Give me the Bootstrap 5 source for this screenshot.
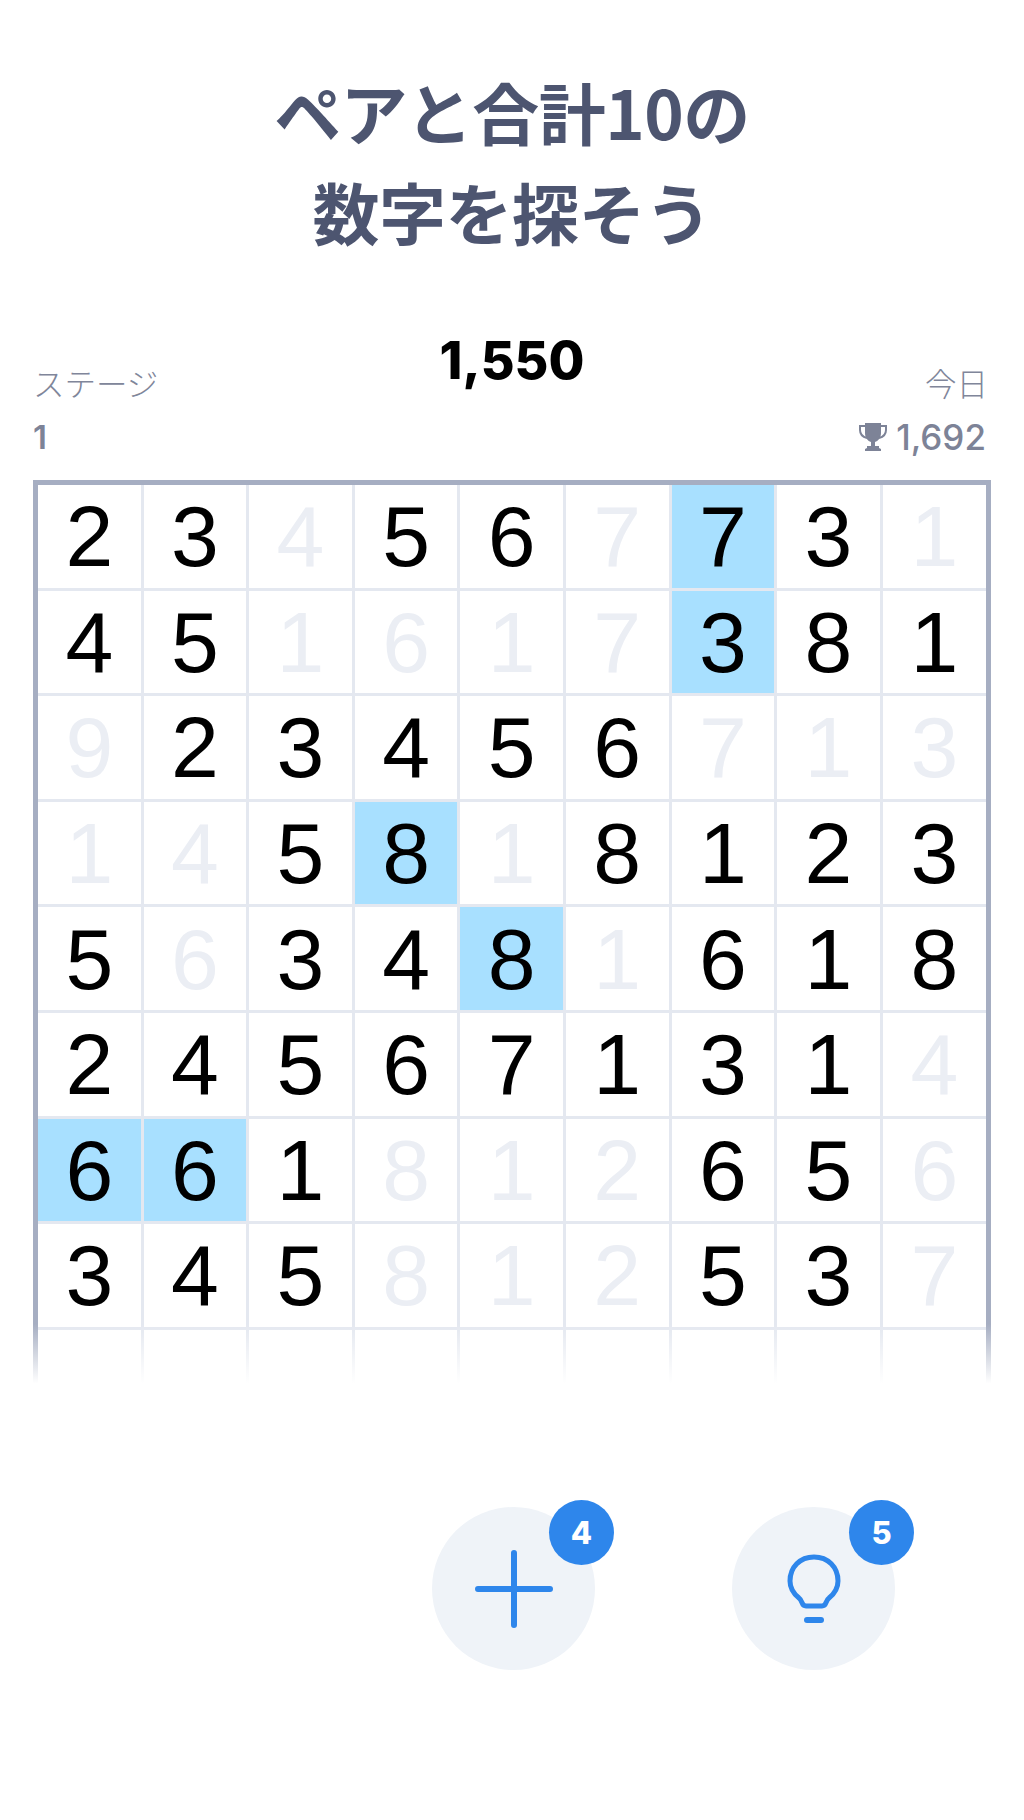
<!DOCTYPE html>
<html lang="ja">
<head>
  <meta charset="UTF-8" />
  <meta name="viewport" content="width=device-width, initial-scale=1" />
  <title>ペアと合計10の数字を探そう</title>
  <link href="https://cdn.jsdelivr.net/npm/bootstrap@5.3.0/dist/css/bootstrap.min.css" rel="stylesheet" />
  <style>
    body { background: #fff; font-family: "Liberation Sans", "Noto Sans CJK JP", sans-serif; overflow: hidden; }
    .game-page { width: 1024px; height: 1820px; padding: 0 33px; }
    .game-title { margin: 0; padding-top: 61px; height: 300px; font: 700 67px/100px "Noto Sans CJK JP", sans-serif; color: #4d5570; letter-spacing: -0.5px; }
    .stat-row { height: 180px; }
    .stat-side { width: 300px; padding-top: 55px; padding-right: 3px; color: #80869a; }
    .stat-label { font: 300 31.5px/54px "Noto Sans CJK JP", sans-serif; }
    .stat-value { font: 500 35px/52px "Inter", sans-serif; color: #7d8397; padding-right: 2px; margin-top: 2px; }
    .stat-value-strong { font-weight: 600; font-size: 33px; }
    .stat-score { font: 800 52px/60px "Inter", sans-serif; color: #000; margin-top: 31px; }
    .board-wrap { height: 910px; overflow: hidden; }
    .board { display: grid; grid-template-columns: repeat(8, 105.6px) 1fr; grid-auto-rows: 105.6px; border: 5px solid #a6aec2; border-bottom: 0; width: 958px; }
    .board-cell { display: flex; align-items: center; justify-content: center; font-size: 86px; line-height: 1; color: #000; border-right: 3px solid #e4e8f0; border-bottom: 3px solid #e4e8f0; }
    .board-cell:nth-child(9n) { border-right: 0; }
    .board-cell.is-done { color: #ebeef4; }
    .board-cell.is-hit { background: #a8e0ff; }
    .board-fade { left: 0; right: 0; bottom: 0; height: 66px; background: linear-gradient(rgba(255,255,255,0), #fff 90%); }
    .tool-row { padding-top: 117px; padding-right: 96px; gap: 137px; }
    .tool-btn { width: 163px; height: 163px; background: #eff3f8; }
    .tool-count { top: -7px; right: -19px; width: 65px; height: 65px; background: #2e86eb; color: #fff; font: 800 31px/65px "Inter", sans-serif; text-align: center; }
  </style>
</head>
<body>
  <div class="game-page">
    <h1 class="game-title text-center">ペアと合計10の<br />数字を探そう</h1>

    <div class="stat-row d-flex justify-content-between">
      <div class="stat-side">
        <div class="stat-label">ステージ</div>
        <div class="stat-value stat-value-strong">1</div>
      </div>
      <div class="stat-score">1,550</div>
      <div class="stat-side text-end">
        <div class="stat-label">今日</div>
        <div class="stat-value d-flex justify-content-end align-items-center gap-2">
          <svg width="30" height="30" viewBox="0 0 30 30" fill="#7d8397">
            <path d="M7 1h16v10c0 5-3 8-6 9v4h4v2l2 1v2H7v-2l2-1v-2h4v-4c-3-1-6-4-6-9z" />
            <path d="M7 4H2v4c0 4 3 7 7 8M23 4h5v4c0 4-3 7-7 8" fill="none" stroke="#7d8397" stroke-width="2" />
          </svg>
          <span>1,692</span>
        </div>
      </div>
    </div>

    <div class="board-wrap position-relative">
      <div class="board" id="board"></div>
      <div class="board-fade position-absolute"></div>
    </div>

    <div class="tool-row d-flex justify-content-end">
      <div class="tool-btn rounded-circle position-relative d-flex align-items-center justify-content-center">
        <svg width="78" height="78" viewBox="0 0 78 78" fill="none" stroke="#2e86eb" stroke-width="6" stroke-linecap="round">
          <path d="M39 3v72M3 39h72" />
        </svg>
        <span class="tool-count rounded-circle position-absolute">4</span>
      </div>
      <div class="tool-btn rounded-circle position-relative d-flex align-items-center justify-content-center">
        <svg width="54" height="70" viewBox="0 0 54 70" fill="none" stroke="#2e86eb" stroke-width="5" stroke-linecap="round" stroke-linejoin="round">
          <path d="M27 3C13 3 3 13 3 27c0 8 4 13 9 17 4 3 2 8 7 8h16c5 0 3-5 7-8 5-4 9-9 9-17C51 13 41 3 27 3z" />
          <path d="M20 66h14" stroke-width="6" />
        </svg>
        <span class="tool-count rounded-circle position-absolute">5</span>
      </div>
    </div>
  </div>

  <script>
    // d = già usato (grigio), h = evidenziato
    const rows = [
      '2 3 4d 5 6 7d 7h 3 1d',
      '4 5 1d 6d 1d 7d 3h 8 1',
      '9d 2 3 4 5 6 7d 1d 3d',
      '1d 4d 5 8h 1d 8 1 2 3',
      '5 6d 3 4 8h 1d 6 1 8',
      '2 4 5 6 7 1 3 1 4d',
      '6h 6h 1 8d 1d 2d 6 5 6d',
      '3 4 5 8d 1d 2d 5 3 7d',
      '_ _ _ _ _ _ _ _ _'
    ];

    const board = document.getElementById('board');
    rows.forEach(row => {
      row.split(' ').forEach(item => {
        const cell = document.createElement('div');
        cell.className = 'board-cell';
        if (item[1] === 'd') cell.classList.add('is-done');
        if (item[1] === 'h') cell.classList.add('is-hit');
        cell.textContent = item[0] === '_' ? '' : item[0];
        board.appendChild(cell);
      });
    });
  </script>
  <script src="https://cdn.jsdelivr.net/npm/bootstrap@5.3.0/dist/js/bootstrap.bundle.min.js"></script>
</body>
</html>
